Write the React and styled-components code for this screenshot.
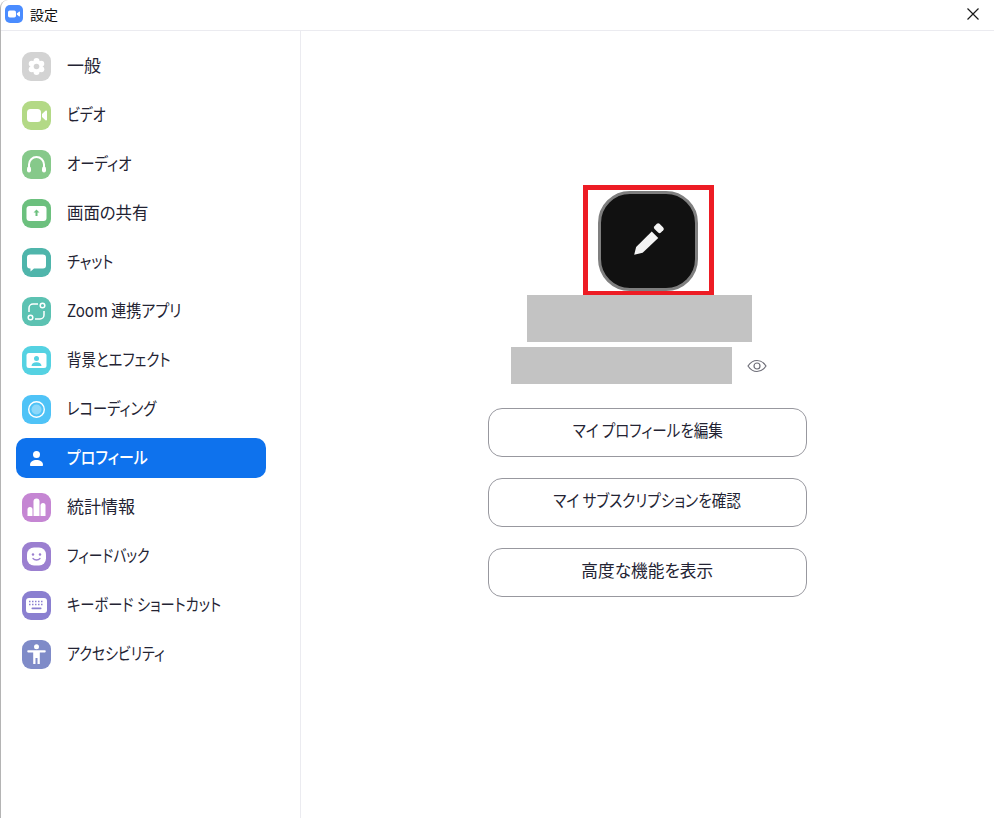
import React from 'react';
import styled, { createGlobalStyle } from 'styled-components';

const GlobalStyle = createGlobalStyle`
  html, body {
    margin: 0;
    padding: 0;
    background: #ffffff;
    overflow: hidden;
  }
  * {
    box-sizing: border-box;
  }
`;

const Window = styled.div`
  width: 994px;
  height: 818px;
  display: flex;
  flex-direction: column;
  background: #ffffff;
  border-left: 1px solid #b4b4b4;
  border-top-left-radius: 8px;
  font-family: "Noto Sans CJK JP", "Open Sans", sans-serif;
  font-feature-settings: "palt";
  color: #232333;
`;

const TitleBar = styled.div`
  height: 31px;
  flex: none;
  display: flex;
  align-items: center;
  padding: 0 14px 2px 4px;
  border-bottom: 1px solid #ebebf0;
`;

const AppLogo = styled.svg`
  width: 18px;
  height: 18px;
  flex: none;
`;

const TitleText = styled.span`
  margin-left: 7px;
  font-size: 14px;
  color: #111111;
`;

const CloseIcon = styled.svg`
  width: 14px;
  height: 14px;
  margin-left: auto;
`;

const Body = styled.div`
  flex: 1;
  display: flex;
  min-height: 0;
`;

const Sidebar = styled.nav`
  width: 300px;
  flex: none;
  display: flex;
  flex-direction: column;
  gap: 9px;
  padding: 15px 0 0 15px;
  border-right: 1px solid #ebebf0;
`;

const NavItem = styled.div`
  width: 250px;
  height: 40px;
  flex: none;
  display: flex;
  align-items: center;
  padding-left: 6px;
  border-radius: 10px;
  background: ${props => props.$active ? "#0e72ed" : "transparent"};
  color: ${props => props.$active ? "#ffffff" : "#232333"};
`;

const Tile = styled.span`
  width: 29px;
  height: 29px;
  flex: none;
  display: flex;
  align-items: center;
  justify-content: center;
  border-radius: 9px;
  background: ${props => props.$color};
`;

const NavLabel = styled.span`
  margin-left: 16px;
  padding-bottom: 3px;
  font-size: 17px;
  line-height: 20px;
  font-weight: ${props => props.$active ? 500 : 400};
  white-space: nowrap;
  transform: scaleX(${props => props.$squeeze});
  transform-origin: left center;
`;

const Main = styled.main`
  flex: 1;
  display: flex;
  flex-direction: column;
  align-items: center;
  padding-top: 154px;
`;

const AvatarFrame = styled.div`
  width: 131px;
  height: 111px;
  margin-left: 2px;
  display: flex;
  align-items: center;
  justify-content: center;
  padding-right: 1px;
  border: 5px solid #ed1c24;
`;

const Avatar = styled.div`
  width: 100px;
  height: 100px;
  flex: none;
  display: flex;
  align-items: center;
  justify-content: center;
  border-radius: 32px;
  background: #111111;
  border: 3px solid #7f7f7f;
`;

const Identity = styled.div`
  display: flex;
  flex-direction: column;
  align-items: center;
  margin-right: 16px;
`;

const NameMask = styled.div`
  width: 225px;
  height: 47px;
  margin-top: -1px;
  background: #c3c3c3;
`;

const EmailRow = styled.div`
  display: flex;
  align-items: center;
  gap: 15px;
  margin: 5px 2px 0 0;
`;

const EmailMask = styled.div`
  width: 221px;
  height: 37px;
  background: #c3c3c3;
`;

const EyeIcon = styled.svg`
  width: 20px;
  height: 14px;
`;

const Actions = styled.div`
  display: flex;
  flex-direction: column;
  gap: 21px;
  margin-top: 24px;
`;

const ActionButton = styled.button`
  width: 319px;
  height: 49px;
  padding: 0 0 6px;
  border: 1px solid #98989f;
  border-radius: 14px;
  background: #ffffff;
  color: #232333;
  font-family: inherit;
  font-feature-settings: inherit;
  font-size: 17px;
`;

const ActionLabel = styled.span`
  display: inline-block;
  white-space: nowrap;
  transform: scaleX(${props => props.$squeeze});
`;

const Glyph = styled.svg`
  width: 21px;
  height: 21px;
`;

const NAV_ITEMS = [
  {
    label: '一般',
    squeeze: 1,
    color: '#d3d3d3',
    icon: (
      <>
        <g fill="#fff">
          <circle cx="10.500" cy="10.500" r="6" />
          <circle cx="10.500" cy="5" r="3" />
          <circle cx="15.260" cy="7.750" r="3" />
          <circle cx="15.260" cy="13.250" r="3" />
          <circle cx="10.500" cy="16" r="3" />
          <circle cx="5.740" cy="13.250" r="3" />
          <circle cx="5.740" cy="7.750" r="3" />
        </g>
        <circle cx="10.500" cy="10.500" r="2.800" fill="#d3d3d3" />
      </>
    ),
  },
  {
    label: 'ビデオ',
    squeeze: 0.82,
    color: '#b3d986',
    icon: (
      <>
        <rect x="1" y="4" width="14" height="13" rx="3.500" fill="#fff" />
        <path d="M16 9l3.500-3.200c.6-.5 1.500-.1 1.500.7v8c0 .8-.9 1.200-1.500.7L16 12z" fill="#fff" />
      </>
    ),
  },
  {
    label: 'オーディオ',
    squeeze: 0.85,
    color: '#86c98a',
    icon: (
      <>
        <path d="M3 15v-4.500a7.500 7.500 0 0 1 15 0V15" fill="none" stroke="#fff" strokeWidth="2" />
        <rect x="1" y="12.500" width="4" height="6" rx="2" fill="#fff" />
        <rect x="16" y="12.500" width="4" height="6" rx="2" fill="#fff" />
      </>
    ),
  },
  {
    label: '画面の共有',
    squeeze: 0.965,
    color: '#6cc07e',
    icon: (
      <>
        <rect x="0.500" y="3" width="20" height="15" rx="3" fill="#fff" />
        <path d="M10.500 6.500l3 3h-2v3.500h-2V9.500h-2z" fill="#6cc07e" />
      </>
    ),
  },
  {
    label: 'チャット',
    squeeze: 0.83,
    color: '#4fb5ab',
    icon: (
      <path d="M4 2.500h13a3 3 0 0 1 3 3v8a3 3 0 0 1-3 3H8l-3.500 3v-3H4a3 3 0 0 1-3-3v-8a3 3 0 0 1 3-3z" fill="#fff" />
    ),
  },
  {
    label: 'Zoom 連携アプリ',
    squeeze: 0.885,
    color: '#5cc2b2',
    icon: (
      <g fill="none" stroke="#fff" strokeWidth="1.500">
        <path d="M12 3H7a4 4 0 0 0-4 4v4" />
        <path d="M9 18h5a4 4 0 0 0 4-4v-4" />
        <circle cx="16.500" cy="4.500" r="2.300" />
        <circle cx="4.500" cy="16.500" r="2.300" />
      </g>
    ),
  },
  {
    label: '背景とエフェクト',
    squeeze: 0.85,
    color: '#55d2e2',
    icon: (
      <>
        <rect x="0.500" y="3" width="20" height="15" rx="2.500" fill="#fff" />
        <circle cx="10.500" cy="8.500" r="2.500" fill="#55d2e2" />
        <path d="M5.500 16c0-2.500 2-3.800 5-3.800s5 1.300 5 3.800z" fill="#55d2e2" />
      </>
    ),
  },
  {
    label: 'レコーディング',
    squeeze: 0.84,
    color: '#4fc3f7',
    icon: (
      <>
        <circle cx="10.500" cy="10.500" r="7.800" fill="none" stroke="#fff" strokeWidth="1.400" />
        <circle cx="10.500" cy="10.500" r="5" fill="#fff" fillOpacity="0.350" />
      </>
    ),
  },
  {
    label: 'プロフィール',
    squeeze: 0.88,
    active: true,
    color: 'transparent',
    icon: (
      <>
        <circle cx="10.500" cy="6.500" r="3.500" fill="#fff" />
        <path d="M4 17c0-3.500 3-5 6.500-5s6.500 1.500 6.500 5c0 .6-.4 1-1 1H5c-.6 0-1-.4-1-1z" fill="#fff" />
      </>
    ),
  },
  {
    label: '統計情報',
    squeeze: 1,
    color: '#c586d3',
    icon: (
      <g fill="#fff">
        <path d="M1.500 12.500a2.500 2.500 0 0 1 5 0V19h-5z" />
        <path d="M7.500 4.500a3 3 0 0 1 6 0V19h-6z" />
        <path d="M14.500 8.500a2.500 2.500 0 0 1 5 0V19h-5z" />
      </g>
    ),
  },
  {
    label: 'フィードバック',
    squeeze: 0.81,
    color: '#9b7fd0',
    icon: (
      <>
        <rect x="1" y="1.500" width="19" height="18" rx="7" fill="#fff" />
        <circle cx="7" cy="8.500" r="1.200" fill="#9b7fd0" />
        <circle cx="14" cy="8.500" r="1.200" fill="#9b7fd0" />
        <path d="M7 12.500c1.800 2 5.200 2 7 0" fill="none" stroke="#9b7fd0" strokeWidth="1.300" strokeLinecap="round" />
      </>
    ),
  },
  {
    label: 'キーボード ショートカット',
    squeeze: 0.84,
    color: '#8a7fd0',
    icon: (
      <>
        <rect x="0" y="3" width="21" height="15" rx="3" fill="#fff" />
        <path d="M3 6.500h15M3 9.500h15" stroke="#8a7fd0" strokeWidth="1.400" strokeDasharray="1.500 1.500" />
        <rect x="5.500" y="12.500" width="10" height="1.700" rx="0.800" fill="#8a7fd0" />
      </>
    ),
  },
  {
    label: 'アクセシビリティ',
    squeeze: 0.82,
    color: '#7f8bc8',
    icon: (
      <g fill="#fff">
        <circle cx="10.500" cy="2.800" r="2.500" />
        <path d="M2 6.300h17c1 0 1 2.200 0 2.200h-5.200V20h-2.300v-6h-2v6H7.200V8.500H2c-1 0-1-2.200 0-2.200z" />
      </g>
    ),
  },
];

const ACTIONS = [
  { label: 'マイ プロフィールを編集', squeeze: 0.855 },
  { label: 'マイ サブスクリプションを確認', squeeze: 0.86 },
  { label: '高度な機能を表示', squeeze: 0.98 },
];

function App() {
  return (
    <>
      <GlobalStyle />
      <Window>
        <TitleBar>
          <AppLogo viewBox="0 0 18 18">
            <rect width="18" height="18" rx="5" fill="#4a8cff" />
            <rect x="3" y="5.500" width="8" height="7" rx="1.800" fill="#fff" />
            <path d="M11.800 8.500l2.400-2c.3-.2.800 0 .8.400v4.200c0 .4-.5.600-.8.400l-2.400-2z" fill="#fff" />
          </AppLogo>
          <TitleText>設定</TitleText>
          <CloseIcon viewBox="0 0 14 14">
            <path d="M1.500 1.500l11 11M12.500 1.500l-11 11" stroke="#1a1a1a" strokeWidth="1.200" fill="none" />
          </CloseIcon>
        </TitleBar>
        <Body>
          <Sidebar>
            {NAV_ITEMS.map(item => (
              <NavItem key={item.label} $active={item.active}>
                <Tile $color={item.color}>
                  <Glyph viewBox="0 0 21 21">{item.icon}</Glyph>
                </Tile>
                <NavLabel $active={item.active} $squeeze={item.squeeze}>{item.label}</NavLabel>
              </NavItem>
            ))}
          </Sidebar>
          <Main>
            <AvatarFrame>
              <Avatar>
                <svg width="39" height="39" viewBox="0 0 30 30">
                  <path d="M4 26l1.500-6L17.500 8l5 5-12 11.500z" fill="#f4f4f4" />
                  <rect x="19.500" y="2.800" width="7" height="5.500" rx="1.500" transform="rotate(45 23 5.500)" fill="#f4f4f4" />
                </svg>
              </Avatar>
            </AvatarFrame>
            <Identity>
              <NameMask />
              <EmailRow>
                <EmailMask />
                <EyeIcon viewBox="0 0 20 14">
                  <path d="M1 7c2.500-3.800 5.500-5.500 9-5.500S16.500 3.200 19 7c-2.500 3.800-5.500 5.500-9 5.500S3.500 10.800 1 7z" fill="none" stroke="#6e6e78" strokeWidth="1.200" />
                  <circle cx="10" cy="7" r="3" fill="none" stroke="#6e6e78" strokeWidth="1.200" />
                </EyeIcon>
              </EmailRow>
            </Identity>
            <Actions>
              {ACTIONS.map(action => (
                <ActionButton key={action.label}>
                  <ActionLabel $squeeze={action.squeeze}>{action.label}</ActionLabel>
                </ActionButton>
              ))}
            </Actions>
          </Main>
        </Body>
      </Window>
    </>
  );
}

export default App;
